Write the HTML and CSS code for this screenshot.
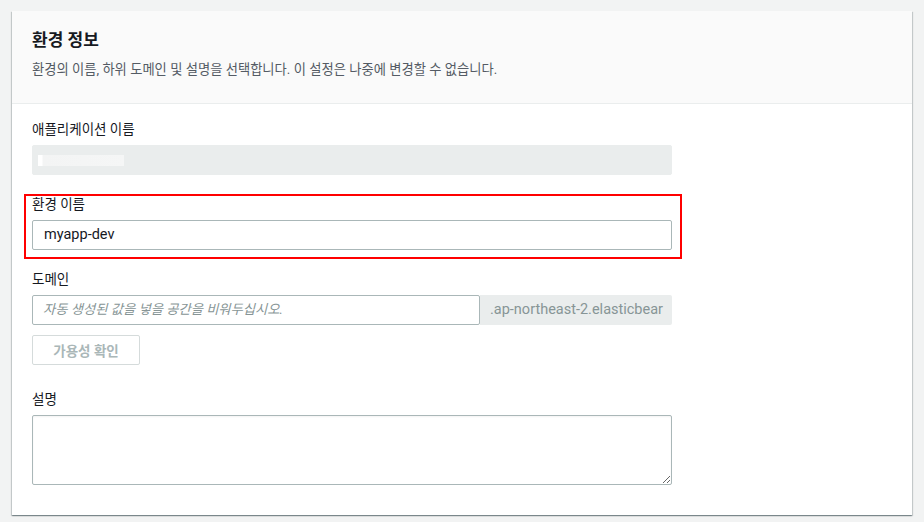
FILE: index.html
```html
<!DOCTYPE html>
<html lang="ko">
<head>
<meta charset="utf-8">
<link rel="stylesheet" href="styles.css">
</head>
<body>
<div class="card">
  <div class="card-header">
    <h2 class="title">환경 정보</h2>
    <p class="subtitle">환경의 이름, 하위 도메인 및 설명을 선택합니다. 이 설정은 나중에 변경할 수 없습니다.</p>
  </div>
  <div class="card-body">
    <div class="field">
      <div class="label">애플리케이션 이름</div>
      <div class="input disabled"><span class="redacted"></span></div>
    </div>
    <div class="field highlighted">
      <div class="label">환경 이름</div>
      <div class="input">myapp-dev</div>
      <div class="highlight-box"></div>
    </div>
    <div class="field">
      <div class="label">도메인</div>
      <div class="input-group">
        <div class="input grow placeholder">자동 생성된 값을 넣을 공간을 비워두십시오.</div>
        <div class="addon">.ap-northeast-2.elasticbear</div>
      </div>
      <button class="btn" type="button">가용성 확인</button>
    </div>
    <div class="field last">
      <div class="label">설명</div>
      <textarea class="textarea"></textarea>
    </div>
  </div>
</div>
</body>
</html>
```

FILE: styles.css
```css
html, body {
  margin: 0;
  padding: 0;
  background: #f2f3f3;
}
body {
  padding: 11px 12px;
  font-family: Roboto, "Noto Sans CJK KR", sans-serif;
  color: #16191f;
  font-size: 14px;
}
.card {
  width: 900px;
  background: #ffffff;
  box-shadow: 0 1px 1px 0 rgba(0, 28, 36, 0.3), 1px 1px 1px 0 rgba(0, 28, 36, 0.15), -1px 1px 1px 0 rgba(0, 28, 36, 0.15);
}
.card-header {
  background: #fafafa;
  border-bottom: 1px solid #eaeded;
  padding: 19px 20px 23px;
}
.title {
  margin: 0;
  font-size: 17px;
  font-weight: 700;
  line-height: 20px;
  color: #16191f;
}
.subtitle {
  margin: 10px 0 0;
  font-size: 13.3px;
  line-height: 20px;
  color: #545b64;
}
.card-body {
  padding: 15px 20px 30px;
}
.field {
  margin-bottom: 19px;
  position: relative;
}
.field.last {
  margin-bottom: 0;
}
.label {
  font-size: 13.5px;
  line-height: 20px;
  margin-bottom: 6px;
  color: #16191f;
}
.input {
  box-sizing: border-box;
  width: 640px;
  height: 30px;
  border: 1px solid #aab7b8;
  border-radius: 2px;
  background: #fff;
  padding: 0 11px;
  font-size: 14.5px;
  line-height: 28px;
  color: #16191f;
}
.input.disabled {
  background: #eaeded;
  border-color: #eaeded;
  padding: 0 5px;
  display: flex;
  align-items: center;
}
.redacted {
  display: block;
  width: 86px;
  height: 11px;
  background: linear-gradient(90deg, #ffffff 0, #ffffff 4px, #f3f4f4 5px, #f5f6f6 100%);
}
.input-group {
  display: flex;
  width: 640px;
}
.input.grow {
  width: 448px;
  flex: none;
}
.placeholder {
  color: #879596;
  font-style: italic;
  font-size: 13.3px;
  padding-left: 10px;
}
.addon {
  flex: 1;
  height: 30px;
  background: #eaeded;
  color: #879596;
  font-size: 14.5px;
  line-height: 30px;
  padding-left: 10px;
  white-space: nowrap;
  overflow: hidden;
  border-radius: 0 2px 2px 0;
}
.btn {
  display: block;
  margin-top: 10px;
  width: 108px;
  height: 30px;
  background: #fff;
  border: 1px solid #d5dbdb;
  border-radius: 2px;
  color: #aab7b8;
  font-family: Roboto, "Noto Sans CJK KR", sans-serif;
  font-weight: 700;
  font-size: 13.5px;
  padding: 0;
  margin-bottom: 24px;
}
.textarea {
  display: block;
  box-sizing: border-box;
  width: 640px;
  height: 70px;
  border: 1px solid #aab7b8;
  border-radius: 2px;
  margin: 0;
  resize: vertical;
  box-shadow: inset 0 1px 2px rgba(0, 0, 0, 0.05);
}
.highlight-box {
  position: absolute;
  left: -8px;
  top: 0;
  width: 658px;
  height: 65px;
  border: 2px solid #ff0000;
  box-sizing: border-box;
  pointer-events: none;
}
```
